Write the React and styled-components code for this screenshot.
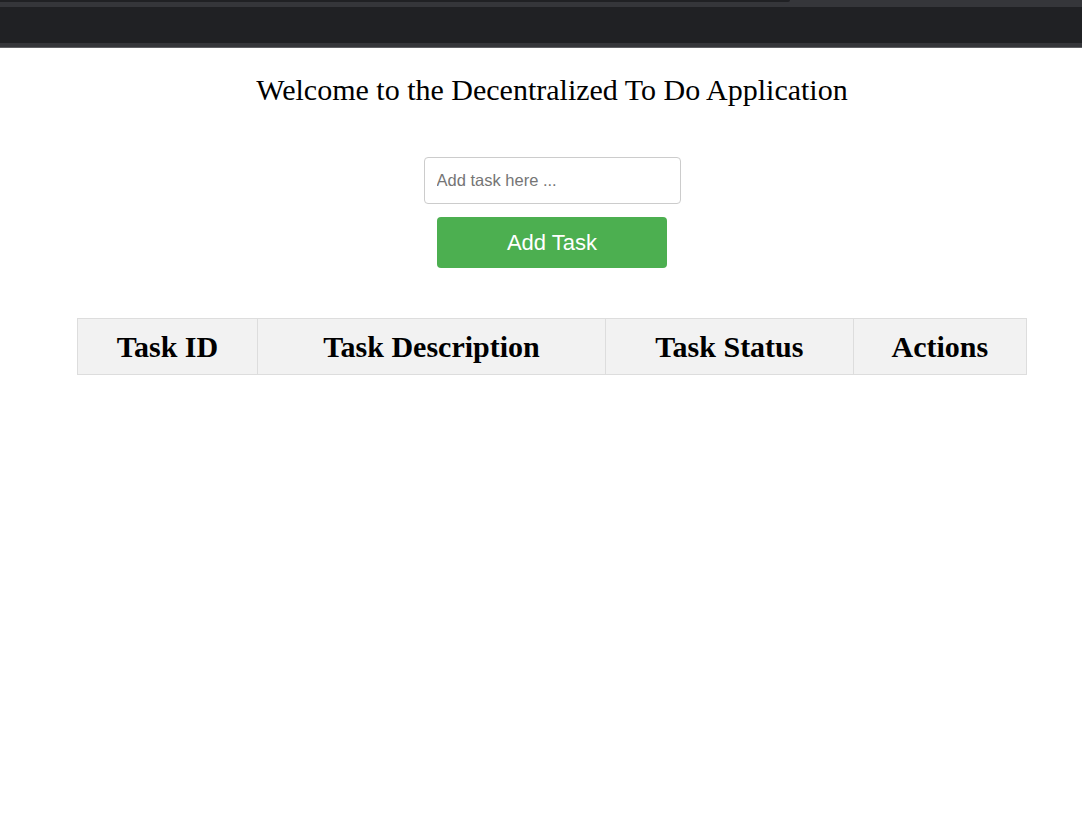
import styled, { createGlobalStyle } from 'styled-components';

const GlobalStyle = createGlobalStyle`
  html, body {
    margin: 0;
    padding: 0;
    background: #ffffff;
  }
  body {
    font-family: "Liberation Serif", "Times New Roman", serif;
    color: #000000;
  }
`;

const columns = [
  { label: 'Task ID', width: 180 },
  { label: 'Task Description', width: 349 },
  { label: 'Task Status', width: 248 },
  { label: 'Actions', width: 173 },
];

function App() {
  return (
    <>
      <GlobalStyle />
      <BrowserBar>
        <TabStrip>
          <ActiveEdge />
        </TabStrip>
        <Toolbar />
        <BottomStrip />
      </BrowserBar>

      <Page>
        <Title>Welcome to the Decentralized To Do Application</Title>

        <Form>
          <TaskInput type="text" placeholder="Add task here ..." />
          <AddButton type="button">Add Task</AddButton>
        </Form>

        <Table>
          <thead>
            <tr>
              {columns.map((col) => (
                <HeadCell key={col.label} $width={col.width}>
                  {col.label}
                </HeadCell>
              ))}
            </tr>
          </thead>
          <tbody />
        </Table>
      </Page>
    </>
  );
}

const BrowserBar = styled.div`
  display: flex;
  flex-direction: column;
  border-bottom: 1px solid #5f6063;
`;

const TabStrip = styled.div`
  height: 7px;
  background: #35363a;
`;

const ActiveEdge = styled.div`
  width: 790px;
  height: 2px;
  background: #202124;
  border-bottom-right-radius: 4px;
`;

const Toolbar = styled.div`
  height: 36px;
  background: #202124;
`;

const BottomStrip = styled.div`
  height: 4px;
  background: #35363a;
`;

const Page = styled.main`
  display: flex;
  flex-direction: column;
  align-items: center;
  margin-left: 22px;
`;

const Title = styled.h2`
  margin: 25px 0 0;
  font-size: 30px;
  font-weight: normal;
  line-height: normal;
`;

const Form = styled.div`
  display: flex;
  flex-direction: column;
  align-items: center;
  gap: 13px;
  margin-top: 50px;
`;

const TaskInput = styled.input`
  box-sizing: border-box;
  width: 257px;
  height: 47px;
  padding: 0 12px;
  border: 1px solid #cccccc;
  border-radius: 4px;
  font-family: "Liberation Sans", Arial, sans-serif;
  font-size: 16.5px;
  color: #333333;
  outline: none;

  &::placeholder {
    color: #757575;
  }
`;

const AddButton = styled.button`
  width: 230px;
  height: 51px;
  border: none;
  border-radius: 4px;
  background: #4caf50;
  color: #ffffff;
  font-family: "Liberation Sans", Arial, sans-serif;
  font-size: 22px;
  cursor: pointer;
`;

const Table = styled.table`
  width: 950px;
  margin-top: 50px;
  border-collapse: collapse;
`;

const HeadCell = styled.th`
  width: ${(p) => p.$width}px;
  height: 55px;
  padding: 0;
  border: 1px solid #dddddd;
  background: #f2f2f2;
  font-size: 30px;
  font-weight: bold;
  line-height: 1;
  text-align: center;
  vertical-align: middle;
`;

export default App;
